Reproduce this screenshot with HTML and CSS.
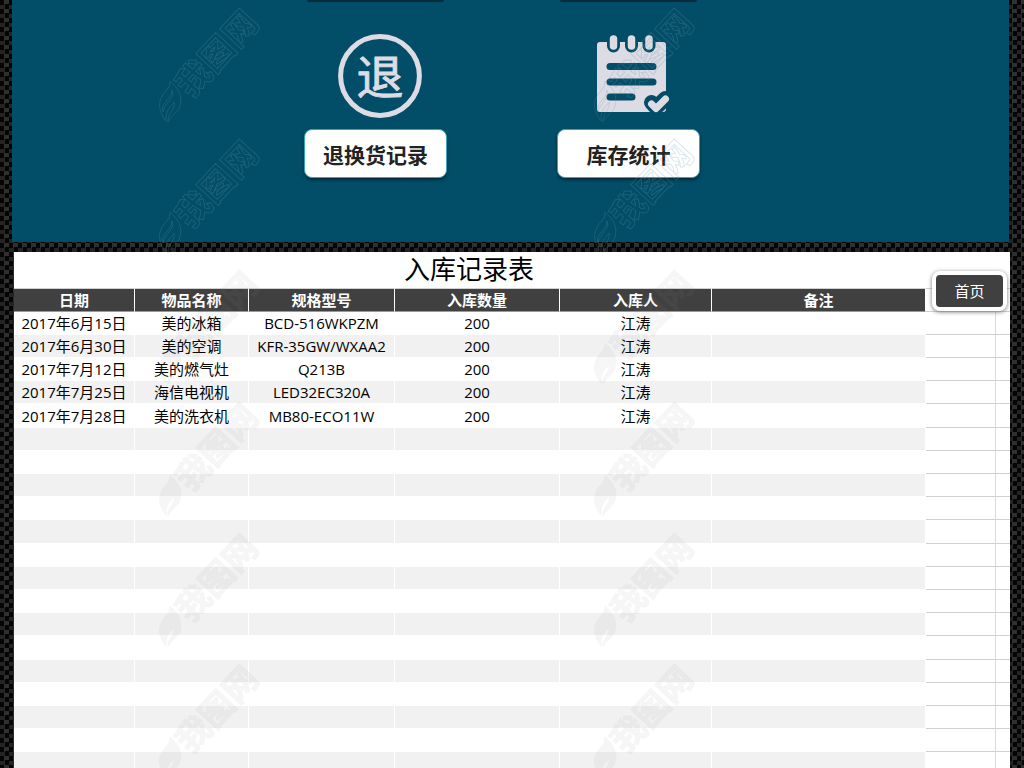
FILE: index.html
```
<!DOCTYPE html>
<html lang="zh-CN">
<head>
<meta charset="utf-8">
<title>入库记录表</title>
<link rel="stylesheet" href="styles.css">
</head>
<body>
<main class="page">
  <section class="menu">
    <div class="menu-previous"><span class="edge"></span><span class="edge"></span></div>
    <div class="menu-grid">
      <div class="menu-item">
        <svg class="menu-icon" viewBox="0 0 84 84" aria-hidden="true">
          <circle cx="42" cy="42" r="39.4" fill="none" stroke="#dddbe3" stroke-width="5"/>
          <text class="icon-char" x="42" y="60" text-anchor="middle">退</text>
        </svg>
        <button class="menu-button" type="button">退换货记录</button>
      </div>
      <div class="menu-item">
        <svg class="menu-icon" viewBox="0 0 84 84" aria-hidden="true">
          <rect x="1" y="8" width="69" height="70" rx="3" fill="#dddbe3"/>
          <g fill="none" stroke="#024d67" stroke-linecap="round">
            <path stroke-width="13" d="M17.500 4V12M35.500 4V12M53 4V12"/>
            <path stroke-width="7" d="M14 32.500H57M14 48H57M14 63H36"/>
            <path stroke-width="15" stroke-linejoin="round" d="M55.500 68.500L60 73.500L69.500 64.500"/>
          </g>
          <g fill="none" stroke="#dddbe3" stroke-linecap="round" stroke-linejoin="round">
            <path stroke-width="7.500" d="M17.500 5V12M35.500 5V12M53 5V12"/>
            <path stroke-width="7" d="M55.500 70L60 74.500L69.500 65"/>
          </g>
        </svg>
        <button class="menu-button" type="button">库存统计</button>
      </div>
    </div>
  </section>

  <section class="sheet">
    <button class="home-button" type="button">首页</button>
    <table class="records">
      <caption>入库记录表</caption>
      <colgroup><col class="c-date"><col class="c-name"><col class="c-model"><col class="c-count"><col class="c-person"><col class="c-note"><col class="c-blank"><col class="c-edge"></colgroup>
      <thead>
        <tr><th>日期</th><th>物品名称</th><th>规格型号</th><th>入库数量</th><th>入库人</th><th>备注</th><td></td><td></td></tr>
      </thead>
      <tbody>
        <tr><td>2017年6月15日</td><td>美的冰箱</td><td>BCD-516WKPZM</td><td>200</td><td>江涛</td><td></td><td></td><td></td></tr>
        <tr><td>2017年6月30日</td><td>美的空调</td><td>KFR-35GW/WXAA2</td><td>200</td><td>江涛</td><td></td><td></td><td></td></tr>
        <tr><td>2017年7月12日</td><td>美的燃气灶</td><td>Q213B</td><td>200</td><td>江涛</td><td></td><td></td><td></td></tr>
        <tr><td>2017年7月25日</td><td>海信电视机</td><td>LED32EC320A</td><td>200</td><td>江涛</td><td></td><td></td><td></td></tr>
        <tr><td>2017年7月28日</td><td>美的洗衣机</td><td>MB80-ECO11W</td><td>200</td><td>江涛</td><td></td><td></td><td></td></tr>
        <tr><td></td><td></td><td></td><td></td><td></td><td></td><td></td><td></td></tr>
        <tr><td></td><td></td><td></td><td></td><td></td><td></td><td></td><td></td></tr>
        <tr><td></td><td></td><td></td><td></td><td></td><td></td><td></td><td></td></tr>
        <tr><td></td><td></td><td></td><td></td><td></td><td></td><td></td><td></td></tr>
        <tr><td></td><td></td><td></td><td></td><td></td><td></td><td></td><td></td></tr>
        <tr><td></td><td></td><td></td><td></td><td></td><td></td><td></td><td></td></tr>
        <tr><td></td><td></td><td></td><td></td><td></td><td></td><td></td><td></td></tr>
        <tr><td></td><td></td><td></td><td></td><td></td><td></td><td></td><td></td></tr>
        <tr><td></td><td></td><td></td><td></td><td></td><td></td><td></td><td></td></tr>
        <tr><td></td><td></td><td></td><td></td><td></td><td></td><td></td><td></td></tr>
        <tr><td></td><td></td><td></td><td></td><td></td><td></td><td></td><td></td></tr>
        <tr><td></td><td></td><td></td><td></td><td></td><td></td><td></td><td></td></tr>
        <tr><td></td><td></td><td></td><td></td><td></td><td></td><td></td><td></td></tr>
        <tr><td></td><td></td><td></td><td></td><td></td><td></td><td></td><td></td></tr>
        <tr><td></td><td></td><td></td><td></td><td></td><td></td><td></td><td></td></tr>
      </tbody>
    </table>
  </section>

  <svg class="watermarks" aria-hidden="true">
    <defs>
      <symbol id="mark" viewBox="0 0 110 120" overflow="visible">
        <path class="flame" d="M7 113C-1 103 -2 92 7 83Q12 78 11 73C19 80 24 88 21 98C19 105 12 107 9 114C8 105 17 102 15 94C13 98 6 101 7 113ZM4 104C1 94 13 92 13 82C17 90 6 94 4 104Z"/>
        <text class="mark-text" transform="translate(32 91) rotate(-47)">我图网</text>
      </symbol>
    </defs>
    <g class="on-dark">
      <use href="#mark" x="159" y="8" width="110" height="120"/>
      <use href="#mark" x="594" y="8" width="110" height="120"/>
      <use href="#mark" x="159" y="139" width="110" height="120"/>
      <use href="#mark" x="594" y="139" width="110" height="120"/>
    </g>
    <g class="on-light">
      <use href="#mark" x="159" y="270" width="110" height="120"/>
      <use href="#mark" x="594" y="270" width="110" height="120"/>
      <use href="#mark" x="159" y="402" width="110" height="120"/>
      <use href="#mark" x="594" y="402" width="110" height="120"/>
      <use href="#mark" x="159" y="533" width="110" height="120"/>
      <use href="#mark" x="594" y="533" width="110" height="120"/>
      <use href="#mark" x="159" y="664" width="110" height="120"/>
      <use href="#mark" x="594" y="664" width="110" height="120"/>
    </g>
  </svg>
</main>
</body>
</html>
```

FILE: styles.css
```
* {
  box-sizing: border-box;
}

body {
  margin: 0;
  font-family: "Open Sans", "Noto Sans CJK SC", sans-serif;
  font-size: 15px;
  color: #000;
}

.page {
  position: relative;
  display: flex;
  flex-direction: column;
  gap: 10px;
  height: 100vh;
  overflow: hidden;
  padding: 0 14px 0 12px;
  background-image: conic-gradient(#303030 25%, #050505 25% 50%, #242424 50% 75%, #050505 75%);
  background-size: 9px 9px;
}

.menu {
  flex: none;
  margin-right: 1px;
  padding-bottom: 64px;
  background: #024d67;
}

.menu-previous,
.menu-grid {
  display: flex;
  justify-content: center;
  gap: 110px;
  padding-right: 17px;
}

.menu-previous {
  padding-bottom: 32px;
}

.edge {
  width: 137px;
  height: 2px;
  margin: 0 3px;
  border-radius: 0 0 6px 6px;
  background: #092c3c;
}

.menu-item {
  display: flex;
  flex-direction: column;
  gap: 11px;
  width: 143px;
}

.menu-icon {
  width: 84px;
  height: 84px;
  margin-left: 34px;
}

.menu-item + .menu-item .menu-icon {
  margin-left: 39px;
}

.icon-char {
  font-family: "Noto Sans CJK SC", sans-serif;
  font-size: 47px;
  font-weight: 400;
  fill: #dddbe3;
  stroke: #dddbe3;
  stroke-width: 1px;
  stroke-linejoin: round;
}

.menu-button {
  height: 49px;
  padding: 0;
  border: 1px solid #35a5b8;
  border-radius: 8px;
  background: #fff;
  box-shadow: 0 2px 3px #052c3b;
  font-family: "Noto Sans CJK SC", sans-serif;
  font-size: 21px;
  font-weight: 700;
  color: #222;
}

.sheet {
  position: relative;
  flex: 1;
  margin-left: 2px;
  background: #fff;
}

.records {
  width: 100%;
  table-layout: fixed;
  border-collapse: separate;
  border-spacing: 0;
}

.records caption {
  height: 36px;
  padding-right: 86px;
  font-family: "Noto Sans CJK SC", sans-serif;
  font-size: 26px;
  line-height: 32px;
}

.c-date { width: 121px; }
.c-name { width: 114px; }
.c-model { width: 146px; }
.c-count { width: 165px; }
.c-person { width: 152px; }
.c-note { width: 214px; }
.c-blank { width: 70px; }
.c-edge { width: 14px; }

.records th,
.records td {
  height: 23px;
  padding: 0;
  border-right: 1px solid #fff;
  border-bottom: 1px solid #fff;
  line-height: 22px;
  text-align: center;
  white-space: nowrap;
}

.records tr:nth-child(5n) td {
  height: 24px;
}

.records thead th,
.records thead td {
  height: 24px;
  border-top: 1px solid #d0d0d0;
}

.records th {
  border-bottom-color: #999;
  background: #404040;
  color: #fff;
  font-weight: 700;
}

.records tbody tr:nth-child(even) td {
  background: #f1f1f1;
}

.records tr td:nth-child(n + 7),
.records tbody tr:nth-child(even) td:nth-child(n + 7) {
  border-right-color: #d9d9d9;
  border-bottom-color: #d0d0d0;
  background: #fff;
}

.records tr td:nth-child(8),
.records tbody tr:nth-child(even) td:nth-child(8) {
  border-right: 0;
}

.home-button {
  position: absolute;
  top: 19px;
  right: 3px;
  width: 75px;
  height: 40px;
  padding: 0 0 2px;
  border: 4px solid #fff;
  border-radius: 8px;
  background: #404040;
  box-shadow: 0 1px 4px #777;
  font-family: "Noto Sans CJK SC", sans-serif;
  font-size: 15px;
  color: #fff;
}

.watermarks {
  position: absolute;
  inset: 0;
  width: 100%;
  height: 100%;
  pointer-events: none;
}

.mark-text {
  font-family: "Noto Sans CJK SC", sans-serif;
  font-size: 34px;
  font-weight: 700;
}

.on-dark {
  fill: none;
  stroke: #6b9daf;
  opacity: 0.25;
}

.on-light {
  fill: #888;
  stroke: #888;
  opacity: 0.08;
}
```
